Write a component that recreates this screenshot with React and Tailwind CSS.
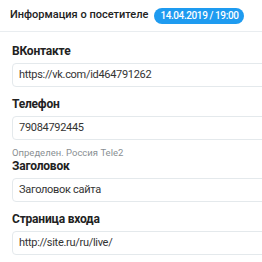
import React from 'react';

const fields = [
  { label: 'ВКонтакте', value: 'https://vk.com/id464791262' },
  { label: 'Телефон', value: '79084792445', hint: 'Определен. Россия Tele2' },
  { label: 'Заголовок', value: 'Заголовок сайта' },
  { label: 'Страница входа', value: 'http://site.ru/ru/live/' },
];

export default function App() {
  return (
    <div className="w-[262px] h-[262px] overflow-hidden bg-white font-['Roboto',sans-serif] text-[#222]">
      <div className="h-[32px] flex items-center gap-[6px] pl-[10px] border-b border-[#e9edf0] whitespace-nowrap">
        <span className="shrink-0 text-[11px] font-medium">Информация о посетителе</span>
        <span className="shrink-0 h-[16px] px-[6px] rounded-full bg-[#1e9bf0] text-white text-[10px] font-medium leading-[16px] tracking-[-0.4px]">
          14.04.2019 / 19:00
        </span>
      </div>
      <div className="pl-[12px] pt-[11px]">
        {fields.map((f) => (
          <div key={f.label} className="mb-[9px]">
            <div className="text-[12px] font-bold leading-[16px] tracking-[-0.2px]">{f.label}</div>
            <div className="mt-[4px] w-[260px] h-[24px] flex items-center px-[6px] border border-[#e4e9ec] rounded-[4px] text-[11px] tracking-[-0.3px] text-[#333] whitespace-nowrap">
              {f.value}
            </div>
            {f.hint && (
              <div className="mt-[7px] -mb-[10px] text-[9.5px] leading-[12px] text-[#8a8f93]">{f.hint}</div>
            )}
          </div>
        ))}
      </div>
    </div>
  );
}
